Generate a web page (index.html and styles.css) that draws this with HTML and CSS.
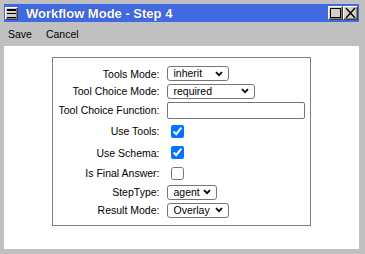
FILE: index.html
```html
<!DOCTYPE html>
<html>
<head>
<meta charset="utf-8">
<link rel="stylesheet" href="styles.css">
</head>
<body>
<div class="window">
  <div class="titlebar">
    <span class="tbtn menu-btn"><span class="bars"></span></span>
    <span class="title">Workflow Mode - Step 4</span>
    <span class="tbtn box-btn"><svg width="13" height="12" viewBox="0 0 13 12"><rect x="1.5" y="1.5" width="10" height="9" fill="none" stroke="#000" stroke-width="1"/></svg></span>
    <span class="tbtn box-btn"><svg width="13" height="12" viewBox="0 0 13 12"><path d="M2 1 L11 11 M11 1 L2 11" stroke="#000" stroke-width="1.4" fill="none"/></svg></span>
  </div>
  <div class="menubar">
    <span class="menu-item">Save</span>
    <span class="menu-item">Cancel</span>
  </div>
  <div class="content">
    <div class="form">
      <label class="lbl">Tools Mode:</label>
      <div class="cell"><select class="sel sel-md"><option>inherit</option><option>none</option><option>auto</option></select></div>
      <label class="lbl">Tool Choice Mode:</label>
      <div class="cell"><select class="sel sel-lg"><option>required</option><option>auto</option><option>none</option></select></div>
      <label class="lbl">Tool Choice Function:</label>
      <div class="cell"><input class="txt" type="text"></div>
      <label class="lbl">Use Tools:</label>
      <div class="cell"><input class="chk" type="checkbox" checked></div>
      <label class="lbl">Use Schema:</label>
      <div class="cell"><input class="chk" type="checkbox" checked></div>
      <label class="lbl">Is Final Answer:</label>
      <div class="cell"><input class="chk" type="checkbox"></div>
      <label class="lbl">StepType:</label>
      <div class="cell"><select class="sel sel-sm"><option>agent</option><option>tool</option></select></div>
      <label class="lbl">Result Mode:</label>
      <div class="cell"><select class="sel sel-md"><option>Overlay</option><option>Append</option></select></div>
    </div>
  </div>
</div>
</body>
</html>
```
FILE: styles.css
```css
html, body {
  margin: 0;
  padding: 0;
  background: #c0c0c0;
}
body {
  font-family: "Liberation Sans", Arial, sans-serif;
  width: 365px;
  height: 254px;
  overflow: hidden;
}
.window {
  box-sizing: border-box;
  height: 254px;
  padding: 4px 6px 5px 4px;
  display: flex;
  flex-direction: column;
}
.titlebar {
  height: 18px;
  background: #4169e1;
  display: flex;
  align-items: center;
  padding: 0 1px 0 1px;
}
.tbtn {
  box-sizing: border-box;
  display: flex;
  align-items: center;
  justify-content: center;
  background: #d4d0c8;
  border: 1px solid;
  border-color: #ffffff #404040 #404040 #ffffff;
  box-shadow: inset -1px -1px 0 #808080;
}
.menu-btn {
  width: 13px;
  height: 13px;
}
.bars {
  box-sizing: border-box;
  width: 9px;
  height: 9px;
  background: linear-gradient(#000 0 1px, transparent 1px 3px, #000 3px 4px, transparent 4px 7px);
  border-top: 1px solid #000;
  border-bottom: 1px solid #000;
}
.title {
  flex: 1;
  margin-left: 8px;
  color: #fff;
  font-weight: bold;
  font-size: 13px;
  text-shadow: 0 0 1px #203080;
}
.box-btn {
  width: 15px;
  height: 14px;
}
.menubar {
  height: 24px;
  display: flex;
  align-items: center;
  padding-left: 4px;
  font-size: 10.5px;
  color: #000;
}
.menu-item {
  margin-right: 14px;
}
.content {
  flex: 1;
  background: #fff;
  display: flex;
  justify-content: center;
  align-items: flex-start;
}
.form {
  margin-top: 11px;
  border: 1px solid #808080;
  padding: 7px 5px 6px 6px;
  display: grid;
  grid-template-columns: auto 138px;
  grid-template-rows: 17px 18px 20px 22px 21px 20px 18px 18px;
  column-gap: 8px;
  align-items: center;
  font-size: 10.5px;
}
.lbl {
  text-align: right;
  white-space: nowrap;
  color: #000;
}
.cell {
  display: flex;
  align-items: center;
}
.sel {
  -webkit-appearance: none;
  appearance: none;
  box-sizing: border-box;
  height: 15px;
  font-family: "Liberation Sans", Arial, sans-serif;
  font-size: 10.5px;
  line-height: 13px;
  padding: 0 0 0 5px;
  margin: 0;
  color: #000;
  background-color: #fff;
  border: 1px solid #767676;
  border-radius: 3px;
  background-image: url("data:image/svg+xml;utf8,<svg xmlns='http://www.w3.org/2000/svg' width='8' height='6' viewBox='0 0 8 6'><path d='M1 1.2 L4 4.2 L7 1.2' fill='none' stroke='black' stroke-width='1.8'/></svg>");
  background-repeat: no-repeat;
  background-position: right 5px center;
  background-size: 8px 6px;
}
.sel-sm { width: 50px; }
.sel-md { width: 62px; }
.sel-lg { width: 88px; }
.txt {
  box-sizing: border-box;
  width: 138px;
  height: 17px;
  margin: 0;
  font-size: 10.5px;
  border: 1px solid #767676;
  border-radius: 2px;
}
.chk {
  width: 13px;
  height: 13px;
  margin: 0 0 0 4px;
}
```
